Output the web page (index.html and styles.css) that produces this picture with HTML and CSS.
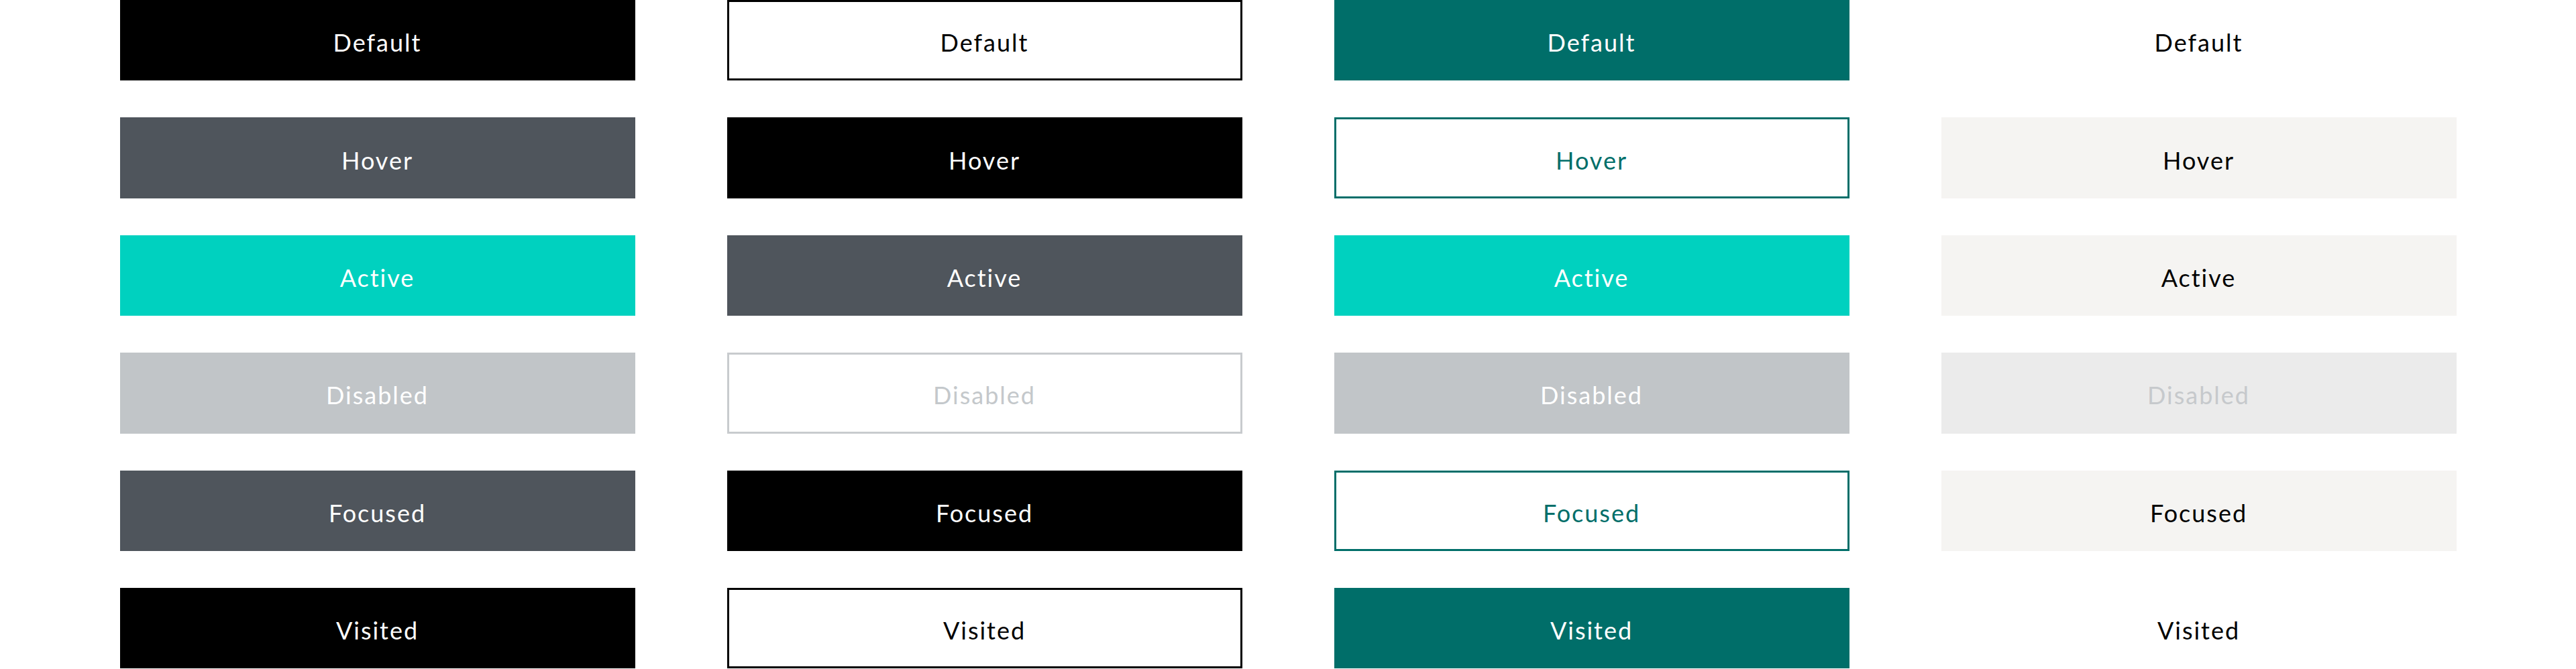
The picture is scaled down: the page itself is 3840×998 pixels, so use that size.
FILE: index.html
```html
<!DOCTYPE html>
<html lang="en">
<head>
<meta charset="utf-8">
<title>Button states</title>
<link rel="stylesheet" href="styles.css">
</head>
<body>
<main class="board">
  <section class="col">
    <div class="btn p-default">Default</div>
    <div class="btn p-hover">Hover</div>
    <div class="btn p-active">Active</div>
    <div class="btn p-disabled">Disabled</div>
    <div class="btn p-focused">Focused</div>
    <div class="btn p-visited">Visited</div>
  </section>
  <section class="col">
    <div class="btn s-default">Default</div>
    <div class="btn s-hover">Hover</div>
    <div class="btn s-active">Active</div>
    <div class="btn s-disabled">Disabled</div>
    <div class="btn s-focused">Focused</div>
    <div class="btn s-visited">Visited</div>
  </section>
  <section class="col">
    <div class="btn t-default">Default</div>
    <div class="btn t-hover">Hover</div>
    <div class="btn t-active">Active</div>
    <div class="btn t-disabled">Disabled</div>
    <div class="btn t-focused">Focused</div>
    <div class="btn t-visited">Visited</div>
  </section>
  <section class="col">
    <div class="btn g-default">Default</div>
    <div class="btn g-hover">Hover</div>
    <div class="btn g-active">Active</div>
    <div class="btn g-disabled">Disabled</div>
    <div class="btn g-focused">Focused</div>
    <div class="btn g-visited">Visited</div>
  </section>
</main>
</body>
</html>
```

FILE: styles.css
```css
html, body {
  margin: 0;
  padding: 0;
  background: #ffffff;
}

body {
  font-family: Lato, "Noto Sans", sans-serif;
}

.board {
  display: grid;
  grid-template-columns: repeat(4, 768px);
  column-gap: 137px;
  justify-content: center;
}

.col {
  display: flex;
  flex-direction: column;
  gap: 55px;
}

.btn {
  box-sizing: border-box;
  height: 120.4px;
  display: flex;
  align-items: center;
  justify-content: center;
  font-size: 36px;
  font-weight: 400;
  letter-spacing: 2px;
  padding-top: 6px;
  border: 3px solid transparent;
}

/* primary (black) */
.p-default { background: #000000; color: #ffffff; }
.p-hover { background: #4f555c; color: #ffffff; }
.p-active { background: #00d1bf; color: #ffffff; }
.p-disabled { background: #c1c5c8; color: #ffffff; }
.p-focused { background: #4f555c; color: #ffffff; }
.p-visited { background: #000000; color: #ffffff; }

/* secondary (outline) */
.s-default { background: #ffffff; color: #000000; border-color: #000000; }
.s-hover { background: #000000; color: #ffffff; }
.s-active { background: #4f555c; color: #ffffff; }
.s-disabled { background: #ffffff; color: #c4c8cb; border-color: #c8cbce; }
.s-focused { background: #000000; color: #ffffff; }
.s-visited { background: #ffffff; color: #000000; border-color: #000000; }

/* teal */
.t-default { background: #006e69; color: #ffffff; }
.t-hover { background: #ffffff; color: #006e69; border-color: #006e69; }
.t-active { background: #00d1bf; color: #ffffff; }
.t-disabled { background: #c1c5c8; color: #ffffff; }
.t-focused { background: #ffffff; color: #006e69; border-color: #006e69; }
.t-visited { background: #006e69; color: #ffffff; }

/* ghost */
.g-default { background: transparent; color: #000000; }
.g-hover { background: #f5f4f2; color: #000000; }
.g-active { background: #f5f4f2; color: #000000; }
.g-disabled { background: #ebebeb; color: #c6c9cc; }
.g-focused { background: #f5f4f2; color: #000000; }
.g-visited { background: transparent; color: #000000; }
```
